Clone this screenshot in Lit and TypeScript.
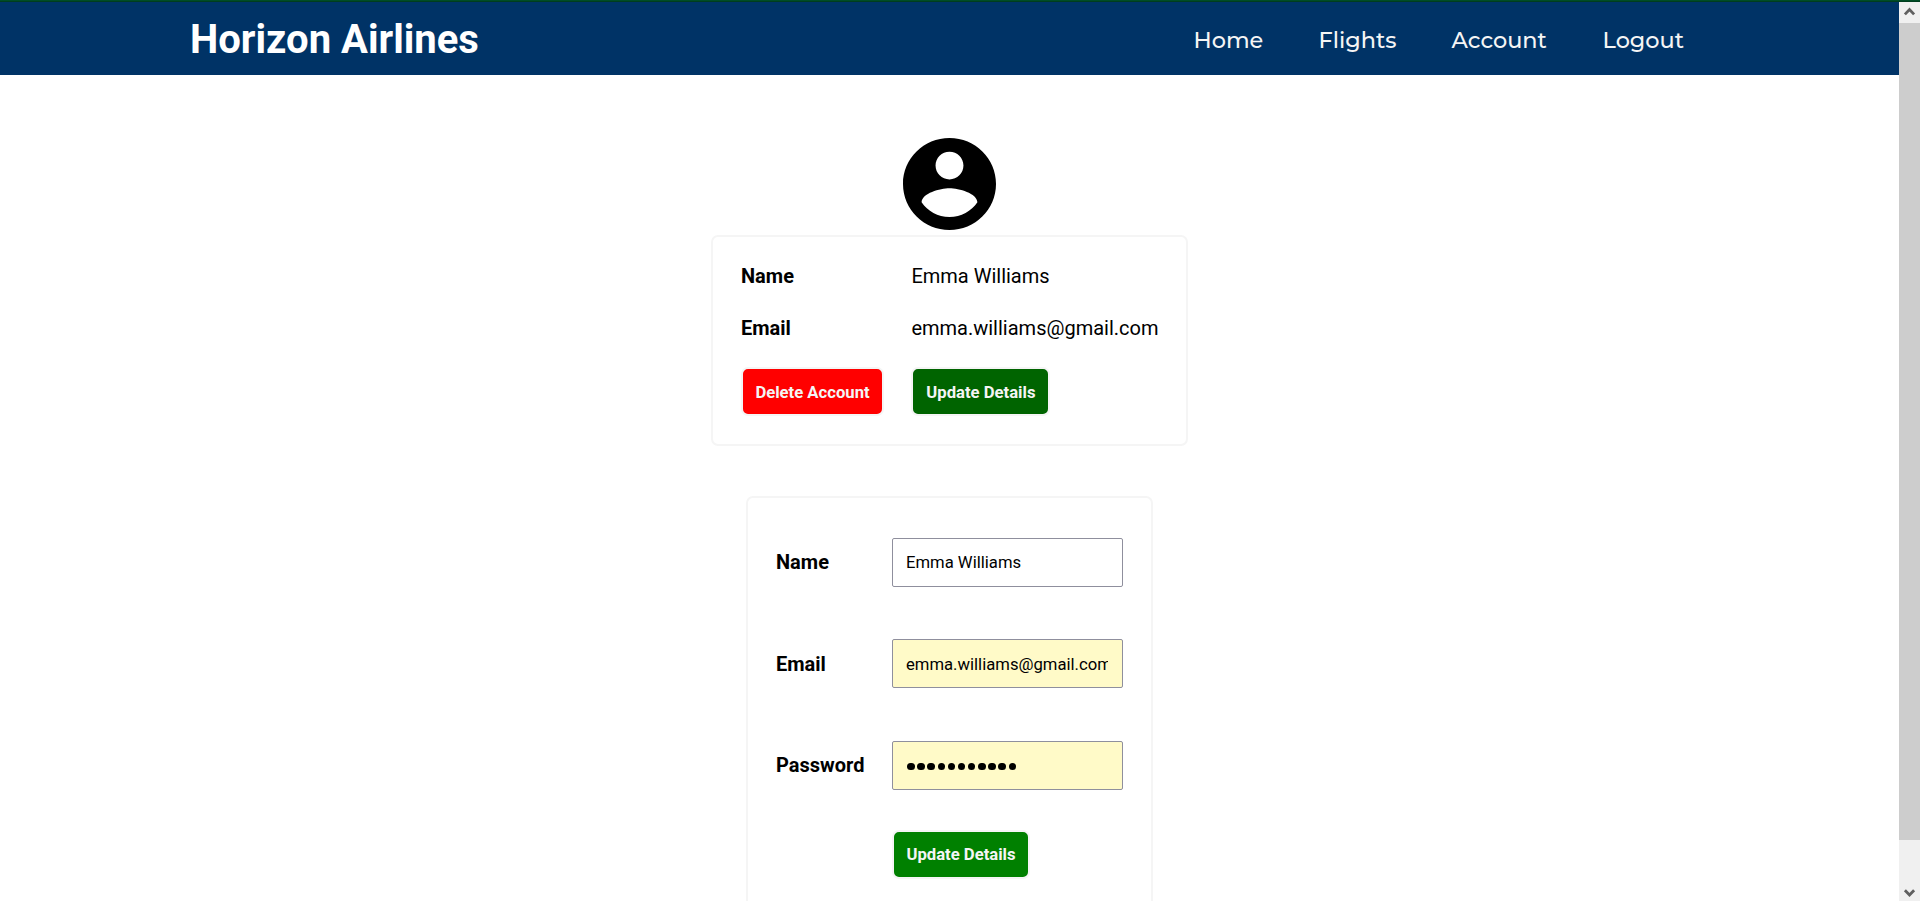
import { LitElement, html, css, svg } from "lit";
import { customElement } from "lit/decorators.js";

@customElement("app-root")
class AppRoot extends LitElement {
  static styles = css`
    :host { display: flex; flex-direction: column; height: 901px; overflow: hidden; background: #fff; color: #000; font-family: Roboto, sans-serif; }
    * { box-sizing: border-box; }
    .strip { flex: none; height: 2px; background: #004d26; border-bottom: 1px solid #003d1e; }
    .window { display: flex; height: 899px; }
    .page { width: 1899px; overflow: hidden; display: flex; flex-direction: column; align-items: center; }
    header { flex: none; width: 100%; height: 73px; background: #003366; color: #fff; display: flex; justify-content: space-between; padding: 0 215px 0 190px; }
    .logo { font-size: 40px; font-weight: 700; line-height: 47px; margin: 0; padding-top: 14px; white-space: nowrap; }
    nav { display: flex; padding-top: 24px; color: #f5f5f5; font: 500 22.4px/28px Montserrat, Inter, sans-serif; }
    .home { width: 125px; }
    .flights { width: 133px; }
    .account { width: 151px; }
    .logout { width: 81.5px; }
    .avatar { flex: none; display: block; width: 93px; height: 92px; margin-top: 63px; }
    .card { flex: none; border: 2px solid #f5f5f5; border-radius: 7px; display: grid; font-size: 20px; line-height: 24px; }
    .details { width: 477px; height: 211px; margin-top: 5px; padding: 27px 28px; grid-template-columns: 170.4px 1fr; grid-template-rows: 52px 51px 50px; }
    .form { width: 407px; height: 450px; margin-top: 50px; padding: 40px 28px; grid-template-columns: 116px 231px; grid-template-rows: 101px 102px 89px 49px; }
    .label { font-weight: 700; }
    .form .label { padding-top: 12px; }
    .form .label.low { padding-top: 13px; }
    .btn { font: 700 16.67px/20px Roboto, sans-serif; color: #f5f5f5; border: 2px solid #f5f5f5; border-radius: 7px; height: 49px; padding: 0; justify-self: start; white-space: nowrap; }
    .details .btn { padding-top: 2px; }
    .delete { background: red; width: 143px; }
    .update { background: #006400; width: 139px; }
    .submit { background: #008000; width: 138px; grid-column: 2; }
    .field { width: 231px; height: 49px; border: 1px solid #8f8f9d; border-radius: 2px; padding: 0 14px 0 13px; font: 400 16.67px/47px Roboto, sans-serif; background: #fff; }
    .text { overflow: hidden; white-space: nowrap; height: 47px; }
    .low .text { line-height: 49px; }
    .filled { background: #fffac8; }
    .dots { display: flex; align-items: center; gap: 2.65px; height: 49px; padding-left: 1.1px; }
    .dot { width: 7.5px; height: 7.5px; border-radius: 50%; background: #000; }
    .scroll { width: 21px; background: #f0f0f0; display: flex; flex-direction: column; }
    .arrow { display: block; width: 21px; height: 21px; }
    .thumb { height: 817px; background: #cdcdcd; }
    .space { flex: 1; }
  `;

  arrow(d: string) {
    return html`<svg class="arrow" viewBox="0 0 21 21">${svg`<path d=${d} fill="none" stroke="#606060" stroke-width="2.8"/>`}</svg>`;
  }

  render() {
    return html`
      <div class="strip"></div>
      <div class="window">
        <main class="page">
          <header>
            <h1 class="logo">Horizon Airlines</h1>
            <nav>
              <span class="home">Home</span><span class="flights">Flights</span><span class="account">Account</span><span class="logout">Logout</span>
            </nav>
          </header>
          <svg class="avatar" viewBox="2 2 20 20" preserveAspectRatio="none">
            <path fill-rule="evenodd" d="M12 2C6.48 2 2 6.48 2 12s4.48 10 10 10 10-4.48 10-10S17.52 2 12 2zm0 3c1.66 0 3 1.34 3 3s-1.34 3-3 3-3-1.34-3-3 1.34-3 3-3zm0 14.2c-2.5 0-4.71-1.28-6-3.22.03-1.99 4-3.08 6-3.08 1.99 0 5.97 1.09 6 3.08-1.29 1.94-3.5 3.22-6 3.22z"/>
          </svg>
          <section class="card details">
            <span class="label">Name</span><span>Emma Williams</span>
            <span class="label">Email</span><span>emma.williams@gmail.com</span>
            <button class="btn delete">Delete Account</button>
            <button class="btn update">Update Details</button>
          </section>
          <section class="card form">
            <span class="label">Name</span>
            <div class="field"><div class="text">Emma Williams</div></div>
            <span class="label low">Email</span>
            <div class="field filled low"><div class="text">emma.williams@gmail.com</div></div>
            <span class="label">Password</span>
            <div class="field filled"><div class="dots">${Array.from({ length: 11 }, () => html`<span class="dot"></span>`)}</div></div>
            <button class="btn submit">Update Details</button>
          </section>
        </main>
        <div class="scroll">
          ${this.arrow("M5.9 12.4 10.5 7.6l4.6 4.8")}
          <div class="thumb"></div>
          <div class="space"></div>
          ${this.arrow("M5.9 10.2 10.5 15l4.6-4.8")}
        </div>
      </div>`;
  }
}
